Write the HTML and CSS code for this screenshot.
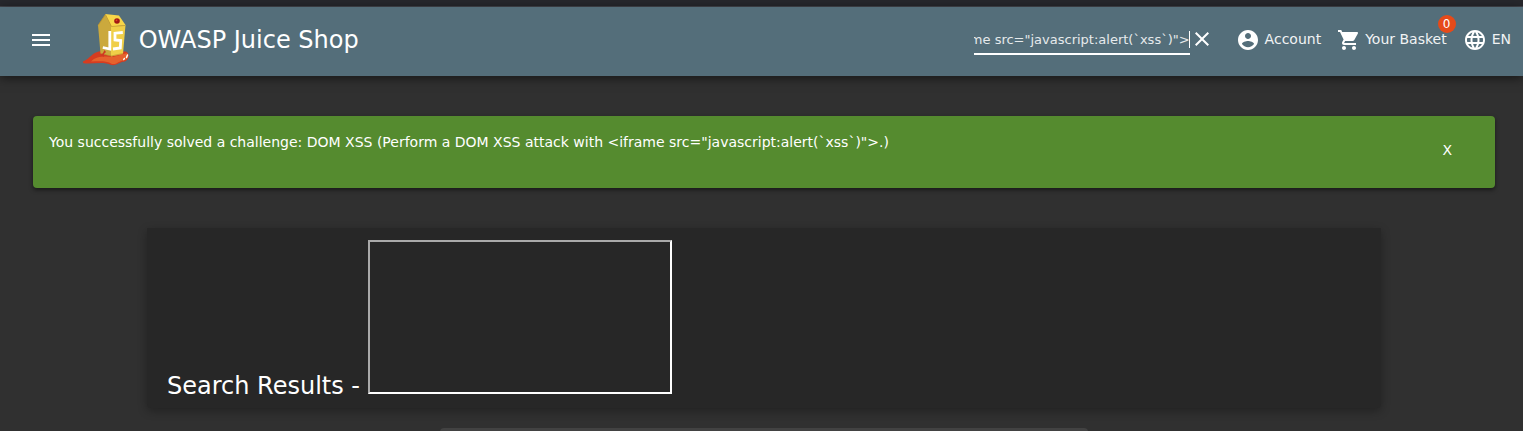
FILE: index.html
```html
<!DOCTYPE html>
<html lang="en">
<head>
<meta charset="utf-8">
<title>OWASP Juice Shop</title>
<link rel="stylesheet" href="styles.css">
</head>
<body>
<div class="window-edge"></div>
<header class="toolbar">
  <button class="menu" aria-label="Menu"><svg viewBox="0 0 24 24"><path d="M3 18h18v-2H3v2zm0-5h18v-2H3v2zm0-7v2h18V6H3z"/></svg></button>
  <svg class="logo" viewBox="80 10 54 58">
    <path fill="#d63c20" d="M83 60.500C90 58 92 51 101 50L126 50.500C130 53 129.500 58 125 60.500C120 60.500 117 65 111 64C104 60.500 94 63 85 62.500C83 62.500 82.500 61 83 60.500Z"/>
    <path fill="#e5622d" d="M91 60.500C96 55 105 55 113 56L127 52C130 56 127 59 123 59.500C118 60.500 117 63.500 112 63C106 59.500 99 60.500 91 60.500Z"/>
    <path fill="#cba93d" d="M98 24L105.500 13L112 25L111 55L100.500 52.500Z"/>
    <path fill="#f0cf48" d="M111 25L125.500 24L123 53L111 55.500Z"/>
    <path fill="#f8d648" d="M105 13L119 14.500L125.500 24L111.500 25.500Z"/>
    <path fill="none" stroke="#b38b2b" stroke-width=".6" d="M98 24.500L105.500 13.500L111.500 25.500L125 24.500M101 52.500L111 55L123 52.500"/>
    <circle cx="117" cy="20" r="2.800" fill="#a31914"/><circle cx="116.500" cy="19.300" r=".9" fill="#e34327"/>
    <path fill="none" stroke="#fff" stroke-width="2.800" d="M109.800 30V48L102.800 46.500"/>
    <path fill="none" stroke="#fff" stroke-width="2.800" d="M122.800 31.500L115 32.200V39L120.700 39.500L120.300 47L113 48"/>
    <path fill="#cf3922" d="M101 54L103 52L104.500 49L106 51L104 53V56Z"/>
    <path fill="none" stroke="#fff" stroke-width="1.500" stroke-linecap="round" d="M123.800 58.500L124.300 57.500M126.500 56.500L127.500 54"/>
  </svg>
  <span class="brand">OWASP Juice Shop</span>
  <div class="search">
    <div class="search-field"><span>&lt;iframe src="javascript:alert(`xss`)"&gt;</span></div>
    <svg class="icon clear" viewBox="0 0 24 24"><path d="M19 6.410L17.590 5 12 10.590 6.410 5 5 6.410 10.590 12 5 17.590 6.410 19 12 13.410 17.590 19 19 17.590 13.410 12z"/></svg>
  </div>
  <a class="action account"><svg class="icon" viewBox="0 0 24 24"><path d="M12 2C6.480 2 2 6.480 2 12s4.480 10 10 10 10-4.480 10-10S17.520 2 12 2zm0 3c1.660 0 3 1.340 3 3s-1.340 3-3 3-3-1.340-3-3 1.340-3 3-3zm0 14.200c-2.500 0-4.710-1.280-6-3.220.03-1.990 4-3.080 6-3.080 1.990 0 5.970 1.090 6 3.080-1.290 1.940-3.500 3.220-6 3.220z"/></svg><span class="label">Account</span></a>
  <a class="action basket"><svg class="icon" viewBox="0 0 24 24"><path d="M7 18c-1.100 0-1.990.9-1.990 2S5.900 22 7 22s2-.9 2-2-.9-2-2-2zM1 2v2h2l3.600 7.590-1.350 2.450c-.16.280-.25.610-.25.960 0 1.100.9 2 2 2h12v-2H7.420c-.14 0-.25-.11-.25-.25l.03-.12.900-1.630h7.450c.75 0 1.410-.41 1.750-1.030l3.580-6.490c.08-.14.120-.31.120-.48 0-.55-.45-1-1-1H5.210l-.94-2H1zm16 16c-1.100 0-1.990.9-1.990 2s.89 2 1.990 2 2-.9 2-2-.9-2-2-2z"/></svg><span class="label badged">Your Basket<span class="badge">0</span></span></a>
  <a class="action language"><svg class="icon" viewBox="0 0 24 24"><path d="M11.990 2C6.470 2 2 6.480 2 12s4.470 10 9.990 10C17.520 22 22 17.520 22 12S17.520 2 11.990 2zm6.930 6h-2.950c-.32-1.250-.78-2.450-1.380-3.560 1.840.63 3.370 1.910 4.330 3.560zM12 4.040c.83 1.200 1.480 2.530 1.910 3.960h-3.820c.43-1.430 1.080-2.760 1.910-3.960zM4.260 14C4.100 13.360 4 12.690 4 12s.1-1.360.26-2h3.380c-.08.660-.14 1.320-.14 2s.06 1.340.14 2H4.260zm.82 2h2.950c.32 1.250.78 2.450 1.380 3.560-1.840-.63-3.370-1.900-4.330-3.560zm2.950-8H5.080c.96-1.660 2.490-2.930 4.330-3.560C8.810 5.550 8.350 6.750 8.030 8zM12 19.960c-.83-1.200-1.480-2.530-1.910-3.960h3.820c-.43 1.430-1.080 2.760-1.910 3.960zM14.340 14H9.660c-.09-.66-.16-1.320-.16-2s.07-1.350.16-2h4.680c.09.650.16 1.320.16 2s-.07 1.340-.16 2zm.25 5.560c.6-1.110 1.060-2.310 1.380-3.560h2.950c-.96 1.650-2.490 2.930-4.330 3.560zM16.360 14c.08-.66.140-1.320.14-2s-.06-1.340-.14-2h3.380c.16.640.26 1.310.26 2s-.1 1.360-.26 2h-3.380z"/></svg><span class="label">EN</span></a>
</header>
<main>
  <section class="notice">
    <p>You successfully solved a challenge: DOM XSS (Perform a DOM XSS attack with &lt;iframe src="javascript:alert(`xss`)"&gt;.)</p>
    <button class="dismiss">X</button>
  </section>
  <section class="results">
    <span class="results-title">Search Results -</span>
    <div class="frame"></div>
  </section>
  <div class="card"></div>
</main>
</body>
</html>
```
FILE: styles.css
```css
* { box-sizing: border-box; }
body {
  margin: 0;
  height: 431px;
  overflow: hidden;
  background: #303030;
  color: #fff;
  font: 14px/20px "DejaVu Sans", sans-serif;
}
button { border: 0; padding: 0; background: none; color: inherit; font: inherit; }
svg { display: block; flex: none; fill: #fff; }
.window-edge { height: 7px; background: #27282d; border-bottom: 1px solid #45474e; }
.toolbar {
  position: relative;
  display: flex;
  align-items: center;
  height: 69px;
  padding: 0 12px 3px 29px;
  background: #546e7a;
  box-shadow: 0 2px 10px rgba(0, 0, 0, .55);
}
.menu svg, .icon { width: 24px; height: 24px; }
.logo { width: 54px; height: 58px; margin: -1px 0 0 26.500px; }
.brand { margin-left: 5.200px; font-size: 24px; line-height: 32px; white-space: nowrap; }
.search { display: flex; margin-left: auto; }
.clear { margin-top: 1px; }
.search-field {
  display: flex;
  justify-content: flex-end;
  width: 216px;
  height: 29px;
  padding: 5px 0 2px;
  overflow: hidden;
  border-bottom: 2px solid #fff;
  font-size: 13px;
  white-space: nowrap;
  color: #e6eaec;
}
.search-field span { height: 17px; line-height: 18px; box-shadow: inset -1px 0 #fff; }
.action { display: flex; align-items: center; gap: 5px; color: #f1f3f4; white-space: nowrap; }
.label { margin-bottom: 2px; }
.account { margin-left: 22px; }
.basket { margin-left: 15.500px; }
.basket .icon { margin-right: -.5px; }
.language { margin-left: 16px; }
.badged { position: relative; }
.badge {
  position: absolute;
  top: -14px;
  right: -9px;
  width: 18px;
  height: 18px;
  border-radius: 50%;
  background: #e64a19;
  color: #fff;
  font-size: 12px;
  line-height: 18px;
  text-align: center;
}
main { padding: 40px 28px 0 33px; }
.notice {
  display: flex;
  justify-content: space-between;
  height: 72px;
  padding: 16px 43px 16px 16px;
  border-radius: 4px;
  background: #558b2f;
  box-shadow: 0 2px 4px rgba(0, 0, 0, .5);
}
.notice p { margin: 0; }
.dismiss { align-self: center; margin-top: -4px; }
.results {
  display: flex;
  align-items: flex-end;
  width: 1234px;
  height: 180px;
  margin: 40px 0 0 114px;
  padding: 0 20px 14px;
  background: #272727;
  border-radius: 0 0 4px 4px;
  box-shadow: 0 3px 10px rgba(0, 0, 0, .3);
}
.results-title { font-size: 24px; line-height: 32px; margin-bottom: -8px; }
.frame { width: 304px; height: 154px; margin-left: 8px; border: 2px solid; border-color: #aaa #fff #fff #aaa; }
.card { width: 648px; height: 20px; margin: 20px 0 0 407px; border-radius: 4px; background: #424242; }
```
